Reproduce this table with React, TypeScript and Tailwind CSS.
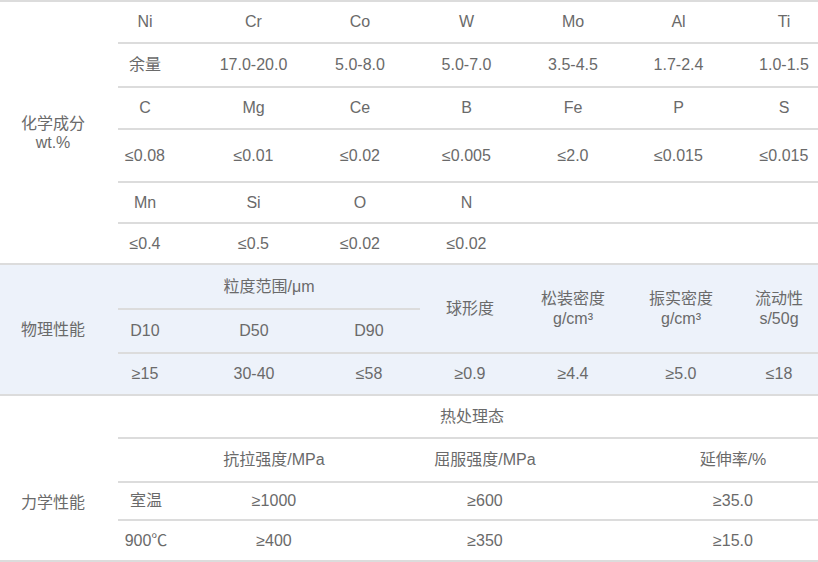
// Alloy spec sheet: chemistry / physical / mechanical property table.
const chemRows: { h: string; cells: string[] }[] = [
  { h: "h-[42px]", cells: ["Ni", "Cr", "Co", "W", "Mo", "Al", "Ti"] },
  { h: "h-[44px]", cells: ["余量", "17.0-20.0", "5.0-8.0", "5.0-7.0", "3.5-4.5", "1.7-2.4", "1.0-1.5"] },
  { h: "h-[42px]", cells: ["C", "Mg", "Ce", "B", "Fe", "P", "S"] },
  { h: "h-[53px]", cells: ["≤0.08", "≤0.01", "≤0.02", "≤0.005", "≤2.0", "≤0.015", "≤0.015"] },
  { h: "h-[41px]", cells: ["Mn", "Si", "O", "N", "", "", ""] },
  { h: "h-[39px]", cells: ["≤0.4", "≤0.5", "≤0.02", "≤0.02", "", "", ""] },
];

const line = "border-[#dcdcdc]";

function SectionLabel({ children }: { children: React.ReactNode }) {
  return (
    <div className="flex w-[118px] shrink-0 flex-col items-center justify-center pr-[12px] text-center leading-[19px]">
      {children}
    </div>
  );
}

function Chemistry() {
  return (
    <section className={`flex border-b-2 ${line}`}>
      <SectionLabel>
        <span>化学成分</span>
        <span>wt.%</span>
      </SectionLabel>
      <div className="min-w-0 flex-1">
        {chemRows.map((row, i) => (
          <div
            key={i}
            className={`${row.h} ${i < chemRows.length - 1 ? `border-b-2 ${line}` : ""}`}
          >
            <div className="grid h-full grid-cols-[82px_107px_106px_107px_106px_105px_106px] items-center text-center">
              {row.cells.map((c, j) => (
                <span key={j} className={j === 0 ? "pr-[28px]" : ""}>
                  {c}
                </span>
              ))}
            </div>
          </div>
        ))}
      </div>
    </section>
  );
}

function Physical() {
  const cell = "flex items-center justify-center text-center";
  return (
    <section className={`flex border-b-2 ${line} bg-[#edf2fa]`}>
      <SectionLabel>物理性能</SectionLabel>
      <div className="min-w-0 flex-1 overflow-hidden">
        <div className="grid w-[704px] grid-cols-[72px_128px_102px_100px_106px_110px_86px] grid-rows-[45px_42px_42px]">
          <div className={`${cell} col-span-3 border-b-2 ${line}`}>粒度范围/μm</div>
          <div className={`${cell} row-span-2`}>球形度</div>
          <div className={`${cell} row-span-2 flex-col leading-[20px]`}>
            <span>松装密度</span>
            <span>g/cm³</span>
          </div>
          <div className={`${cell} row-span-2 flex-col leading-[20px]`}>
            <span>振实密度</span>
            <span>g/cm³</span>
          </div>
          <div className={`${cell} row-span-2 flex-col leading-[20px]`}>
            <span>流动性</span>
            <span>s/50g</span>
          </div>
          <div className={`${cell} pr-[18px]`}>D10</div>
          <div className={cell}>D50</div>
          <div className={cell}>D90</div>
          {["≥15", "30-40", "≤58", "≥0.9", "≥4.4", "≥5.0", "≤18"].map((v, i) => (
            <div key={i} className={`${cell} border-t-2 ${line} ${i === 0 ? "pr-[18px]" : ""}`}>
              {v}
            </div>
          ))}
        </div>
      </div>
    </section>
  );
}

function Mechanical() {
  const cols = "grid grid-cols-[56px_200px_222px_274px] items-center text-center";
  return (
    <section className={`flex border-b-2 ${line}`}>
      <div className="flex w-[118px] shrink-0 flex-col">
        <div className="h-[43px]" />
        <div className="flex flex-1 items-center justify-center pr-[12px] pt-[7px]">力学性能</div>
      </div>
      <div className="min-w-0 flex-1 overflow-hidden">
        <div className={`flex h-[43px] items-center justify-center border-b-2 ${line} pl-2`}>
          热处理态
        </div>
        <div className={`${cols} h-[44px] border-b-2 ${line}`}>
          <span />
          <span>抗拉强度/MPa</span>
          <span>屈服强度/MPa</span>
          <span>延伸率/%</span>
        </div>
        <div className={`${cols} h-[38px] border-b-2 ${line}`}>
          <span>室温</span>
          <span>≥1000</span>
          <span>≥600</span>
          <span>≥35.0</span>
        </div>
        <div className={`${cols} h-[39px]`}>
          <span>900℃</span>
          <span>≥400</span>
          <span>≥350</span>
          <span>≥15.0</span>
        </div>
      </div>
    </section>
  );
}

export default function App() {
  return (
    <div
      className={`h-[562px] w-[818px] overflow-hidden border-t-2 ${line} bg-white text-[16px] text-[#6a6a6a]`}
      style={{ fontFamily: '"Liberation Sans", Arial, "Noto Sans CJK SC", sans-serif' }}
    >
      <Chemistry />
      <Physical />
      <Mechanical />
    </div>
  );
}
